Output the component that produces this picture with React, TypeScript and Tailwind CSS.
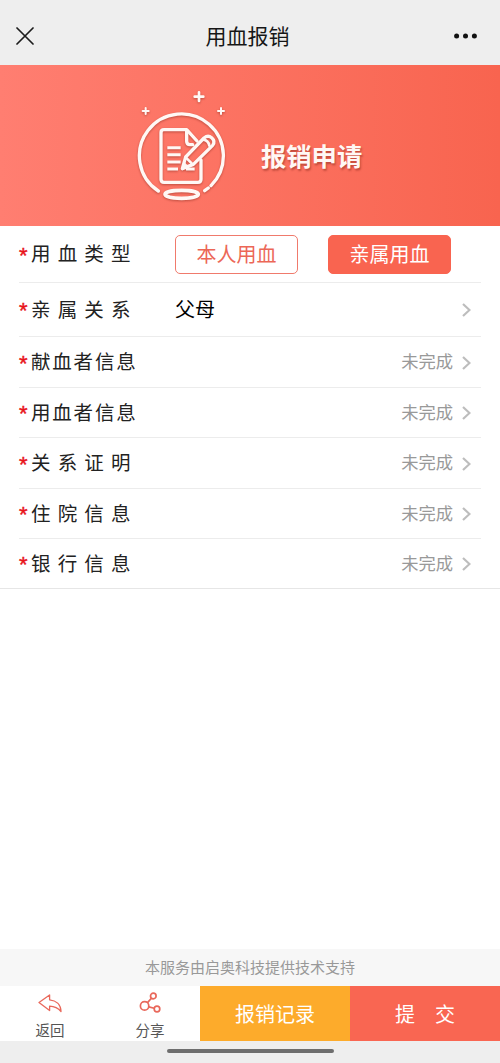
import { useState } from "react";

const rowBase = "flex items-center border-[#ececec]";

const labelBase = "w-[144px] whitespace-nowrap pb-[2px] text-[19.5px] leading-[26px] text-[#222]";

const infoRows = [
  { label: "献血者信息", height: "h-[51px]", wide: false },
  { label: "用血者信息", height: "h-[50px]", wide: false },
  { label: "关系证明", height: "h-[51px]", wide: true },
  { label: "住院信息", height: "h-[50px]", wide: true },
  { label: "银行信息", height: "h-[49px]", wide: true },
];

const bloodTypes = ["本人用血", "亲属用血"];

function Required() {
  return (
    <span className="w-[12px] pt-[3px] font-['Liberation_Sans',sans-serif] text-[22px] leading-[20px] text-[#e8131b] [-webkit-text-stroke:0.4px_#e8131b]">
      *
    </span>
  );
}

function Chevron() {
  return (
    <svg
      className="mt-[1px] mr-[10px] h-[14px] w-[9px]"
      viewBox="0 0 9 14"
      fill="none"
      stroke="#bdbdbd"
      strokeWidth="2.2"
    >
      <path d="M1 1l6.5 6L1 13" />
    </svg>
  );
}

function ApplyIcon() {
  return (
    <svg
      className="mt-[15px] ml-[120px] h-[130px] w-[130px] drop-shadow-[0_1px_1px_rgba(120,30,20,0.45)]"
      viewBox="0 0 390 390"
      fill="none"
      stroke="#fff8f5"
      strokeWidth="10"
      strokeLinecap="round"
      strokeLinejoin="round"
    >
      {/* sparkles */}
      <path d="M237 37v26M224 50h26" strokeWidth="8" />
      <path d="M77 84v18M68 93h18M303 84v18M294 93h18" strokeWidth="6" />
      {/* open ring and base */}
      <path d="M115 333A126 126 0 1 1 273 317" />
      <path d="M265 324L254 332" />
      <ellipse cx="185" cy="343" rx="50" ry="12" strokeWidth="11" />
      {/* document */}
      <path d="M243 240v58q0 9-9 9H132q-9 0-9-9V158q0-9 9-9h68l31 34" />
      <path d="M200 151v33q0 10 10 10h8" />
      <path
        d="M142 203h40M142 224h40M142 246h40M142 267h32M198 267h26"
        strokeWidth="9"
        strokeLinecap="butt"
      />
      {/* pencil */}
      <path d="M187 266l10-35 55-57q12-10 23-1 12 11 3 23l-58 57z" />
      <path d="M250 179q15 2 18 18M198 233l20 20" strokeWidth="8" />
      <path d="M187 266l6-18 11 11z" fill="#fff8f5" strokeWidth="3" />
    </svg>
  );
}

export default function App() {
  const [bloodType, setBloodType] = useState("亲属用血");

  return (
    <div className="flex h-[1063px] w-[500px] flex-col overflow-hidden bg-white font-['Noto_Sans_CJK_SC',sans-serif]">
      <header className="flex h-[65px] shrink-0 items-center justify-between bg-[#eee] pt-[7px] pr-[23px] pl-[16px]">
        <svg
          className="h-[18px] w-[18px]"
          viewBox="0 0 18 18"
          fill="none"
          stroke="#1c1c1c"
          strokeWidth="1.7"
          strokeLinecap="round"
        >
          <path d="M1 1l16 16M17 1L1 17" />
        </svg>
        <h1 className="ml-[7px] pb-[2px] text-[21px] leading-[30px] text-[#161616]">用血报销</h1>
        <svg className="h-[6px] w-[23px]" viewBox="0 0 23 6" fill="#111">
          <circle cx="2.6" cy="3" r="2.5" />
          <circle cx="11.5" cy="3" r="2.5" />
          <circle cx="20.4" cy="3" r="2.5" />
        </svg>
      </header>

      <section className="flex h-[161px] shrink-0 items-start bg-linear-to-r from-[#ff7e71] to-[#f8644f]">
        <ApplyIcon />
        <h2 className="mt-[72px] ml-[11px] text-[25.3px] leading-[36px] font-bold text-[#fff8f5] [text-shadow:1px_2px_2px_rgba(120,30,20,0.45)]">
          报销申请
        </h2>
      </section>

      <main className="flex-1">
        <div className="px-[19px]">
          <div className={`${rowBase} h-[57px] border-b`}>
            <Required />
            <span className={`${labelBase} tracking-[7.15px]`}>用血类型</span>
            <div className="flex gap-[30px]">
              {bloodTypes.map((type) => (
                <button
                  key={type}
                  onClick={() => setBloodType(type)}
                  className={`h-[39px] w-[123px] rounded-[5px] border pb-[1px] text-[20px] leading-[26px] ${
                    bloodType === type
                      ? "border-[#f96450] bg-[#f96450] text-white"
                      : "border-[#f07a6c] bg-white text-[#ec6757]"
                  }`}
                >
                  {type}
                </button>
              ))}
            </div>
          </div>

          <div className={`${rowBase} h-[54px] border-b`}>
            <Required />
            <span className={`${labelBase} tracking-[7.15px]`}>亲属关系</span>
            <span className="flex-1 pb-[2px] text-[20px] leading-[26px] text-black">父母</span>
            <Chevron />
          </div>
        </div>

        <div className="border-b border-[#e6e6e6] px-[19px]">
          {infoRows.map((row, i) => (
            <div
              key={row.label}
              className={`${rowBase} ${row.height} ${i < infoRows.length - 1 ? "border-b" : ""}`}
            >
              <Required />
              <span className={`${labelBase} ${row.wide ? "tracking-[7.15px]" : "tracking-[1.8px]"}`}>
                {row.label}
              </span>
              <span className="mr-[9px] flex-1 pb-[2px] text-right text-[17.3px] leading-[24px] text-[#999]">
                未完成
              </span>
              <Chevron />
            </div>
          ))}
        </div>
      </main>

      <p className="h-[37px] shrink-0 bg-[#f7f7f7] text-center text-[15px] leading-[36px] text-[#999]">
        本服务由启奥科技提供技术支持
      </p>

      <nav className="flex h-[55px] shrink-0">
        <button className="flex w-[100px] flex-col items-center pt-[6px] text-[14.5px] leading-[20px] text-[#555]">
          <svg
            className="mb-[6px] h-[22px] w-[26px]"
            viewBox="0 0 26 22"
            fill="none"
            stroke="#e9685b"
            strokeWidth="1.3"
            strokeLinejoin="round"
          >
            <path d="M2 10.5L12.6 3v4.8c6.5.6 11.2 4.7 11.4 11.7-2.8-3.4-6.2-5.1-11.4-5.3v4.3z" />
          </svg>
          返回
        </button>
        <button className="flex w-[100px] flex-col items-center pt-[6px] text-[14.5px] leading-[20px] text-[#555]">
          <svg
            className="mb-[6px] h-[22px] w-[22px]"
            viewBox="0 0 22 22"
            fill="none"
            stroke="#e9685b"
            strokeWidth="1.7"
          >
            <circle cx="5.6" cy="13.9" r="4.2" />
            <circle cx="14.3" cy="4" r="2.8" />
            <circle cx="18" cy="17" r="2.8" />
            <path d="M8.5 10.6l3.9-4.4M9.9 14.9l5.2 1.3" />
          </svg>
          分享
        </button>
        <button className="w-[150px] bg-[#fdab2b] text-[20px] text-white">报销记录</button>
        <button className="w-[150px] bg-[#f96652] pl-[20px] text-[20px] tracking-[20px] text-white">
          提交
        </button>
      </nav>

      <div className="flex h-[22px] shrink-0 justify-center bg-[#eee] pt-[8px]">
        <div className="h-[4px] w-[167px] rounded-full bg-[#6e6e6e]" />
      </div>
    </div>
  );
}
